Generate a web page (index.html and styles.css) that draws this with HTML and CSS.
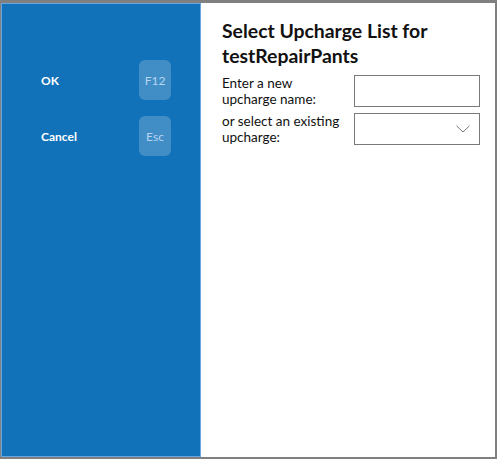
FILE: index.html
```html
<!DOCTYPE html>
<html>
<head>
<meta charset="utf-8">
<link rel="stylesheet" href="styles.css">
</head>
<body>
<div class="dialog">
  <div class="side">
    <div class="action">
      <span class="action-label">OK</span>
      <span class="key">F12</span>
    </div>
    <div class="action">
      <span class="action-label">Cancel</span>
      <span class="key">Esc</span>
    </div>
  </div>
  <div class="main">
    <h1 class="title">Select Upcharge List for testRepairPants</h1>
    <div class="form">
      <label class="label">Enter a new upcharge name:</label>
      <div class="field"></div>
      <label class="label">or select an existing upcharge:</label>
      <div class="field select">
        <svg class="chevron" width="14" height="8" viewBox="0 0 14 8"><path d="M0.5 0.8 L7 7 L13.5 0.8" fill="none" stroke="#7a7a7a" stroke-width="1"/></svg>
      </div>
    </div>
  </div>
</div>
</body>
</html>
```

FILE: styles.css
```css
html, body {
  margin: 0;
  padding: 0;
}
body {
  background: #808080;
  width: 497px;
  height: 459px;
  overflow: hidden;
  font-family: Lato, "Noto Sans", sans-serif;
}
.dialog {
  margin: 3px 0 0 1px;
  width: 494px;
  height: 454px;
  display: flex;
}
.side {
  box-sizing: border-box;
  width: 200px;
  height: 100%;
  background: #1272b9;
  border: 1px solid #69a6e0;
  padding: 56px 0 0 39px;
  display: flex;
  flex-direction: column;
  gap: 16px;
}
.action {
  display: flex;
  align-items: center;
  height: 40px;
}
.action-label {
  width: 98px;
  color: #ffffff;
  font-weight: bold;
  font-size: 12px;
}
.key {
  width: 32px;
  height: 40px;
  border-radius: 6px;
  background: rgba(255, 255, 255, 0.2);
  color: #b7d4ef;
  font-size: 12px;
  display: flex;
  align-items: center;
  justify-content: center;
}
.main {
  flex: 1;
  background: #ffffff;
  padding: 15px 0 0 21px;
}
.title {
  margin: 0;
  font-size: 19.4px;
  line-height: 25px;
  font-weight: bold;
  color: #111111;
  width: 240px;
}
.form {
  margin-top: 7px;
  display: grid;
  grid-template-columns: 132px 126px;
  row-gap: 6px;
  align-items: center;
}
.label {
  font-size: 13.5px;
  line-height: 16px;
  color: #111111;
  padding-right: 12px;
}
.field {
  box-sizing: border-box;
  height: 32px;
  border: 1px solid #7a7a7a;
  background: #ffffff;
}
.select {
  display: flex;
  align-items: center;
  justify-content: flex-end;
  padding-right: 9px;
}
.chevron {
  display: block;
}
```
